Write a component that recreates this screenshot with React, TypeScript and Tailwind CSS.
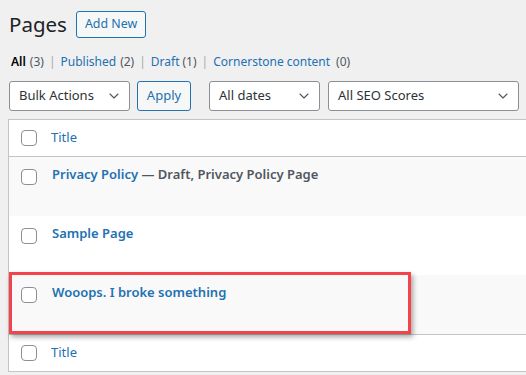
import { ChevronDown } from 'lucide-react';

function Checkbox() {
  return <span className="block h-4 w-4 shrink-0 rounded-[4px] border border-[#8c8f94] bg-white" />;
}

function Select({ label, width }: { label: string; width: string }) {
  return (
    <div className={`flex h-[30px] items-center justify-between rounded-[3px] border border-[#8c8f94] bg-white pl-[9px] pr-[7px] text-[13px] text-[#2c3338] ${width}`}>
      <span>{label}</span>
      <ChevronDown className="h-4 w-4 text-[#50575e]" strokeWidth={1.6} />
    </div>
  );
}

const rows = [
  { title: 'Privacy Policy', state: ' — Draft, Privacy Policy Page', bg: 'bg-[#f9f9f9]' },
  { title: 'Sample Page', state: '', bg: 'bg-white' },
  { title: 'Wooops. I broke something', state: '', bg: 'bg-[#f9f9f9]' },
];

export default function App() {
  return (
    <div
      className="relative h-[375px] w-[526px] overflow-hidden bg-[#f0f0f1] text-[12.2px] text-[#3c434a]"
      style={{ fontFamily: '"Noto Sans", "Open Sans", sans-serif' }}
    >
      <div className="flex items-center pl-[9px] pt-[10px]">
        <h1 className="text-[20.5px] leading-[28px] font-normal text-[#1d2327]">Pages</h1>
        <button className="ml-[9px] h-[27px] rounded-[3px] border border-[#2271b1] bg-[#f6f7f7] px-[8px] text-[12.4px] text-[#2271b1]">
          Add New
        </button>
      </div>

      <div className="mt-[15px] flex items-center pl-[11px] text-[12px] leading-[18px] text-[#50575e]">
        <span className="font-semibold text-[#000]">All</span>
        <span className="ml-[4px]">(3)</span>
        <span className="mx-[5px] text-[#a7aaad]">|</span>
        <span className="text-[#2271b1]">Published</span>
        <span className="ml-[4px]">(2)</span>
        <span className="mx-[5px] text-[#a7aaad]">|</span>
        <span className="text-[#2271b1]">Draft</span>
        <span className="ml-[3px]">(1)</span>
        <span className="mx-[5px] text-[#a7aaad]">|</span>
        <span className="text-[#2271b1]">Cornerstone content</span>
        <span className="ml-[6px]">(0)</span>
      </div>

      <div className="mt-[10px] flex items-center pl-[9px]">
        <Select label="Bulk Actions" width="w-[121px]" />
        <button className="ml-[7px] h-[30px] w-[54px] rounded-[3px] border border-[#2271b1] bg-[#f6f7f7] text-[13px] text-[#2271b1]">
          Apply
        </button>
        <div className="ml-[18px]">
          <Select label="All dates" width="w-[111px]" />
        </div>
        <div className="ml-[8px]">
          <Select label="All SEO Scores" width="w-[191px]" />
        </div>
      </div>

      <div className="ml-[8px] mt-[8px] w-[540px] border border-[#c3c4c7] bg-white">
        <div className="flex h-[37px] items-center gap-[14px] border-b border-[#c3c4c7] pl-[12px] text-[13px] text-[#2271b1]">
          <Checkbox />
          <span>Title</span>
        </div>
        {rows.map((r) => (
          <div key={r.title} className={`flex h-[59px] items-start gap-[15px] pl-[12px] pt-[12px] ${r.bg}`}>
            <Checkbox />
            <span className="-mt-[6px] text-[13px] font-semibold leading-[22px]">
              <span className="text-[#2271b1]">{r.title}</span>
              {r.state && <span className="text-[#50575e]">{r.state}</span>}
            </span>
          </div>
        ))}
        <div className="flex h-[37px] items-center gap-[14px] border-t border-[#c3c4c7] pl-[12px] text-[13px] text-[#2271b1]">
          <Checkbox />
          <span>Title</span>
        </div>
      </div>

      <div className="pointer-events-none absolute left-[9px] top-[272px] h-[62px] w-[402px] border-[3px] border-[#f2444a] shadow-[2px_3px_5px_rgba(0,0,0,0.35)]" />
    </div>
  );
}
